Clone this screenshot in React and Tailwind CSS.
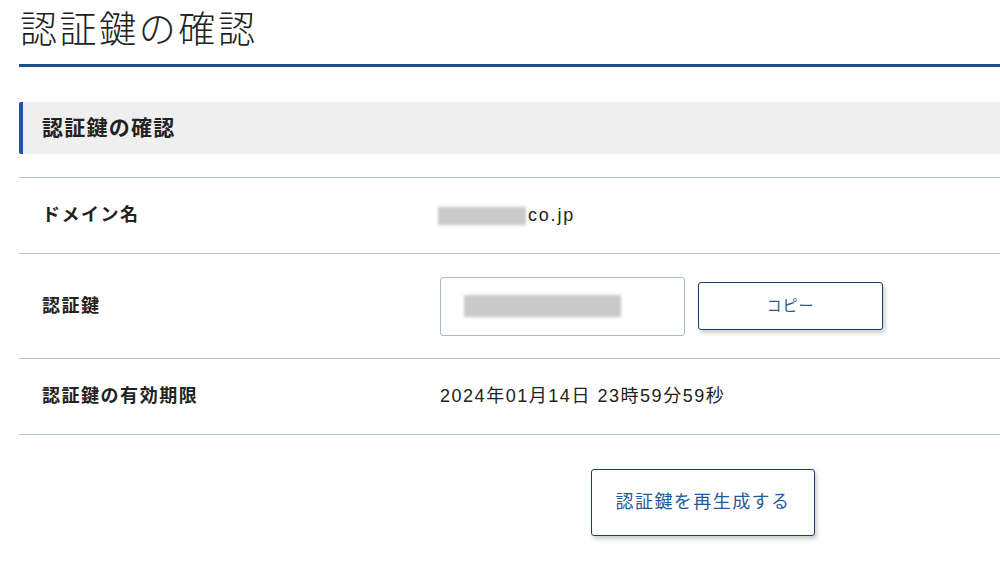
import React from "react";

const font = { fontFamily: '"Liberation Sans", "Noto Sans CJK JP", sans-serif' };

function Blur({ w, h, className = "" }) {
  return (
    <span
      className={`inline-block bg-[#c9c9c9] blur-[1.5px] ${className}`}
      style={{ width: w, height: h }}
    />
  );
}

function Row({ label, children, h }) {
  return (
    <div className={`flex items-center border-b border-[#b3c3d2] ${h}`}>
      <div className="w-[421px] shrink-0 pl-[23px] text-[18px] font-bold tracking-[0.085em] text-[#222]">
        {label}
      </div>
      <div className="flex items-center">{children}</div>
    </div>
  );
}

export default function App() {
  return (
    <div className="w-[1000px] h-[565px] overflow-hidden bg-white" style={font}>
      <div className="ml-[19px] w-[990px]">
        <h1 className="pt-[6px] pl-[1px] h-[64px] text-[37px] leading-[50px] font-light tracking-[0.07em] text-[#222]">
          認証鍵の確認
        </h1>
        <div className="h-[3px] bg-[#1f4e8c]" />
        <div className="mt-[35px] h-[52px] flex items-center bg-[#efefef] border-l-[4px] border-[#1f56a0] rounded-l-[2px] pl-[19px] text-[21px] font-bold tracking-[0.06em] text-[#222]">
          認証鍵の確認
        </div>
        <div className="mt-[23px] border-t border-[#b3c3d2]">
          <Row label="ドメイン名" h="h-[76px]">
            <span className="flex items-center gap-[1px] -ml-[2px] mr-[2px]">
              <Blur w={88} h={18} />
            </span>
            <span className="text-[18px] tracking-[0.1em] text-[#222]">co.jp</span>
          </Row>
          <Row label="認証鍵" h="h-[105px]">
            <div className="w-[245px] h-[59px] border border-[#a6bacd] rounded-[3px] flex items-center pl-[23px]">
              <Blur w={157} h={22} className="bg-[#c4c4c4]" />
            </div>
            <button className="ml-[13px] w-[185px] h-[48px] border-[1.5px] border-[#1d3f6e] rounded-[3px] bg-white shadow-[2px_3px_4px_rgba(0,0,0,0.2)] text-[15px] tracking-[0.07em] text-[#2a5a94]">
              コピー
            </button>
          </Row>
          <Row label="認証鍵の有効期限" h="h-[76px]">
            <span className="text-[18px] tracking-[0.085em] text-[#222]">
              2024年01月14日 23時59分59秒
            </span>
          </Row>
        </div>
        <div className="pt-[34px] pl-[572px]">
          <button className="w-[224px] h-[67px] border-[1.5px] border-[#1d3f6e] rounded-[3px] bg-white shadow-[2px_3px_4px_rgba(0,0,0,0.2)] text-[18px] tracking-[0.08em] text-[#1f5a9a]">
            認証鍵を再生成する
          </button>
        </div>
      </div>
    </div>
  );
}
